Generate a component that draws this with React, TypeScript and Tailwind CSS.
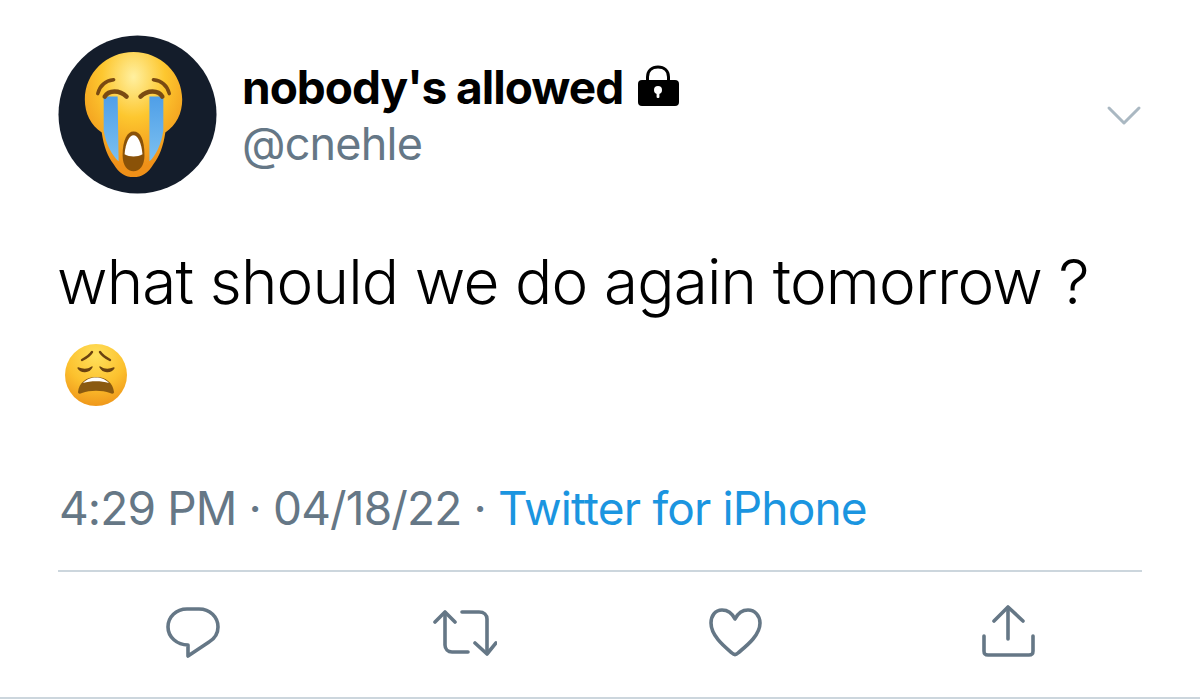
const font = { fontFamily: 'Inter, "Liberation Sans", Arial, sans-serif' };

function CryingFace() {
  return (
    <svg viewBox="0 0 160 160" className="w-[159px] h-[159px] shrink-0">
      <defs>
        <radialGradient id="head" cx="50%" cy="20%" r="72%">
          <stop offset="0%" stopColor="#fff0a0" />
          <stop offset="45%" stopColor="#fdc72f" />
          <stop offset="100%" stopColor="#ef9018" />
        </radialGradient>
        <linearGradient id="tear" x1="0" y1="0" x2="0" y2="1">
          <stop offset="0%" stopColor="#4f9fe8" />
          <stop offset="100%" stopColor="#7cc0f0" />
        </linearGradient>
      </defs>
      <circle cx="80" cy="80" r="79.5" fill="#141d2b" />
      <path
        d="M76 17C49 17 27 38 27 65C27 79 33 91 44 98C46 112 50 122 56 130C61 139 68 143 76 143C84 143 91 139 96 130C102 122 106 112 108 98C119 91 125 79 125 65C125 38 103 17 76 17Z"
        fill="url(#head)"
      />
      <path d="M46 62L60 62L61 127C55 122 48 110 46 96Z" fill="url(#tear)" />
      <path d="M92 62L106 62L106 96C104 110 98 122 92 127Z" fill="url(#tear)" />
      <path d="M40 59C42 51 48 46 56 45" fill="none" stroke="#7a4a12" strokeWidth="3.5" strokeLinecap="round" />
      <path d="M112 59C110 51 104 46 96 45" fill="none" stroke="#7a4a12" strokeWidth="3.5" strokeLinecap="round" />
      <path d="M47 62C51 55 62 55 69 62" fill="none" stroke="#7a4a12" strokeWidth="4.5" strokeLinecap="round" />
      <path d="M105 62C101 55 90 55 83 62" fill="none" stroke="#7a4a12" strokeWidth="4.5" strokeLinecap="round" />
      <path d="M65 121C65 105 70 97 76 97C83 97 87 105 87 121C87 132 82 137 76 137C70 137 65 132 65 121Z" fill="#8a5208" />
      <path d="M67 120C68 108 72 101 76 101C80 101 84 108 85 120C80 123 72 123 67 120Z" fill="#fff" />
    </svg>
  );
}

function WearyFace() {
  return (
    <svg viewBox="0 0 62 62" className="w-[62px] h-[62px]">
      <defs>
        <radialGradient id="weary" cx="50%" cy="18%" r="80%">
          <stop offset="0%" stopColor="#ffe05c" />
          <stop offset="60%" stopColor="#fcc12e" />
          <stop offset="100%" stopColor="#f09a1c" />
        </radialGradient>
      </defs>
      <circle cx="31" cy="31" r="31" fill="url(#weary)" />
      <path d="M17 16C21 14 25 11 27 8" fill="none" stroke="#6b4210" strokeWidth="2.4" strokeLinecap="round" />
      <path d="M45 16C41 14 37 11 35 8" fill="none" stroke="#6b4210" strokeWidth="2.4" strokeLinecap="round" />
      <path d="M13 24C18 26 23 26 27 23C24 29 16 29 13 24Z" fill="#6b4210" stroke="#6b4210" strokeWidth="1.4" strokeLinejoin="round" />
      <path d="M49 24C44 26 39 26 35 23C38 29 46 29 49 24Z" fill="#6b4210" stroke="#6b4210" strokeWidth="1.4" strokeLinejoin="round" />
      <path d="M13 48C14 39 21 33 31 33C41 33 48 39 49 48C49 50 47 50 45 49C37 46 25 46 17 49C15 50 13 50 13 48Z" fill="#8a5a10" />
      <path d="M18 39C22 35 26 33.5 31 33.5C36 33.5 40 35 44 39C36 36.5 26 36.5 18 39Z" fill="#fff" />
    </svg>
  );
}

function LockIcon() {
  return (
    <svg viewBox="0 0 42 42" className="w-[42px] h-[42px] shrink-0 mb-[2px]">
      <path d="M10.5 16V12C10.5 5.5 15 2 21 2C27 2 31.5 5.5 31.5 12V16" fill="none" stroke="#000" strokeWidth="3" />
      <rect x="1" y="15" width="41" height="26" rx="4" fill="#000" />
      <circle cx="21" cy="25" r="4" fill="#fff" />
      <rect x="19.6" y="26" width="2.8" height="7" rx="1" fill="#fff" />
    </svg>
  );
}

function ActionIcon({ className, children }: { className: string; children: React.ReactNode }) {
  return (
    <svg
      className={className}
      fill="none"
      stroke="#657786"
      strokeWidth="3.6"
      strokeLinecap="round"
      strokeLinejoin="round"
      viewBox={className.includes("w-[64px]") ? "0 0 64 56" : "0 0 56 56"}
    >
      {children}
    </svg>
  );
}

export default function App() {
  return (
    <div style={font} className="w-[1200px] h-[699px] bg-white flex flex-col overflow-hidden border-b-2 border-[#ccd6dd]">
      <div className="flex pl-[58px] pr-[58px] pt-[35px]">
        <CryingFace />
        <div className="ml-[25px] pt-[25px]">
          <div className="flex items-center gap-[14px] h-[54px]">
            <span className="text-[46px] font-bold text-black leading-[54px] tracking-[-1px]">nobody's allowed</span>
            <LockIcon />
          </div>
          <div className="text-[45px] text-[#657786] leading-[54px] mt-[3px] tracking-[-0.8px]">@cnehle</div>
        </div>
        <svg viewBox="0 0 36 24" className="ml-auto mt-[67px] w-[36px] h-[24px]" fill="none" stroke="#aab8c2" strokeWidth="3" strokeLinecap="round" strokeLinejoin="round">
          <path d="M3 6L18 21L33 6" />
        </svg>
      </div>

      <div className="pl-[57px] mt-[48px] text-[62px] font-light leading-[80px] tracking-[-0.85px] text-black whitespace-nowrap">
        what should we do again tomorrow ?
      </div>
      <div className="pl-[65px] mt-[22px]">
        <WearyFace />
      </div>

      <div className="pl-[59px] mt-[72px] text-[46px] leading-[60px] tracking-[-0.85px] text-[#657786] whitespace-nowrap">
        4:29 PM · 04/18/22 · <span className="text-[#1b95e0]">Twitter for iPhone</span>
      </div>

      <div className="mx-[58px] mt-[32px] border-t-2 border-[#ccd6dd]" />

      <div className="flex pl-[165px] mt-[33px]">
        <ActionIcon className="w-[56px] h-[56px]">
          <path d="M22 4H34C45 4 53 12 53 22C53 29 49 34 44 37L23 51V40C12 40 3 32 3 22C3 12 11 4 22 4Z" />
        </ActionIcon>
        <ActionIcon className="w-[64px] h-[56px] ml-[212px]">
          <path d="M2 17L12 7L22 17" />
          <path d="M12 8V40C12 44 15 47 19 47H35" />
          <path d="M29 7H46C51 7 54 10 54 14V47" />
          <path d="M42 38L54 49L63 38" />
        </ActionIcon>
        <ActionIcon className="w-[56px] h-[56px] ml-[210px]">
          <path d="M28 14C25 8 21 5 15 5C8 5 4 11 4 18C4 31 18 42 25 48C27 50 29 50 31 48C38 42 53 31 53 18C53 11 48 5 41 5C35 5 31 8 28 14Z" />
        </ActionIcon>
        <ActionIcon className="w-[56px] h-[56px] ml-[217px]">
          <path d="M14 16L28 2L43 16" />
          <path d="M28 3V34" />
          <path d="M4 31V46C4 49 5 50 8 50H49C52 50 53 49 53 46V31" />
        </ActionIcon>
      </div>
    </div>
  );
}
